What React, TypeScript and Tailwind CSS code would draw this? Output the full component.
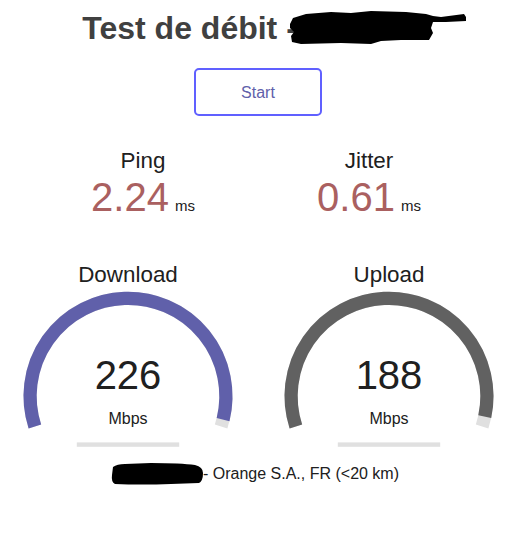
import React from 'react'

// canvas-like gauge geometry (same maths as the original meter drawing)
const W = 256
const H = 200
const sz = H * 0.0055
const LW = 12 * sz
const CX = W / 2
const CY = H - 58 * sz
const R = H / 1.8 - LW

const mbpsToAmount = (s: number) => 1 - 1 / Math.pow(1.3, Math.sqrt(s))

function arcPath(a0: number, a1: number) {
  const x0 = CX + R * Math.cos(a0)
  const y0 = CY + R * Math.sin(a0)
  const x1 = CX + R * Math.cos(a1)
  const y1 = CY + R * Math.sin(a1)
  const large = a1 - a0 > Math.PI ? 1 : 0
  return `M ${x0} ${y0} A ${R} ${R} 0 ${large} 1 ${x1} ${y1}`
}

const Gauge: React.FC<{ name: string; value: string; color: string }> = ({ name, value, color }) => {
  const amount = mbpsToAmount(Number(value))
  const start = -Math.PI * 1.1
  return (
    <div className="relative w-[256px] h-[200px] shrink-0">
      <svg className="absolute inset-0" width={W} height={H} viewBox={`0 0 ${W} ${H}`}>
        <path d={arcPath(start, Math.PI * 0.1)} stroke="#E0E0E0" strokeWidth={LW} fill="none" />
        <path d={arcPath(start, amount * Math.PI * 1.2 + start)} stroke={color} strokeWidth={LW} fill="none" />
        <rect x={W * 0.3} y={H - 16 * sz} width={W * 0.4} height={4 * sz} fill="#E0E0E0" />
      </svg>
      <div className="relative flex flex-col items-center text-[#202020]">
        <div className="pt-[2px] text-[22.4px] leading-[26px]">{name}</div>
        <div className="mt-[64px] text-[40px] leading-[46px]">{value}</div>
        <div className="mt-[12px] text-[16px] leading-[18px]">Mbps</div>
      </div>
    </div>
  )
}

const SmallTest: React.FC<{ name: string; value: string }> = ({ name, value }) => (
  <div className="w-[224px] h-[112px] shrink-0 text-center">
    <div className="text-[22.4px] leading-[26px] text-[#202020]">{name}</div>
    <div className="flex items-baseline justify-center">
      <span className="text-[40px] leading-[46px] text-[#AA6060]">{value}</span>
      <span className="ml-[6px] text-[15px] text-[#202020]">ms</span>
    </div>
  </div>
)

export default function App() {
  return (
    <div className="w-[516px] bg-white pt-[10px] text-center font-['Liberation_Sans',Arial,sans-serif]">
      <h1 className="mb-[21px] text-[32px] leading-[37px] font-bold text-[#404040]">
        Test de débit -{' '}
        <svg className="inline-block align-[-4px] overflow-visible" width="128" height="32" viewBox="0 0 128 32">
          <path
            d="M-16 13 L-13 7 L0 3 L25 1 L45 2 L65 0 L100 1 L120 3 L127 5 L135 6 L158 3 L160 6 L160 10 L140 11 L127 11 L125 17 L127 22 L123 29 L95 29 L75 30 L65 33 L35 32 L-5 33 L-14 31 L-15 25 L-12 21 L-16 17 Z"
            fill="#000"
          />
        </svg>
      </h1>

      <button className="w-[128px] h-[48px] rounded-[5px] border-[2.4px] border-[#6060FF] bg-transparent text-[16px] leading-[43px] text-[#6060AA]">
        Start
      </button>

      <div className="mt-[32px] flex pl-[31px] gap-[2px]">
        <SmallTest name="Ping" value="2.24" />
        <SmallTest name="Jitter" value="0.61" />
      </div>

      <div className="flex gap-[5px]">
        <Gauge name="Download" value="226" color="#6060AA" />
        <Gauge name="Upload" value="188" color="#616161" />
      </div>

      <div className="mt-[3px] pr-[6px] text-[16px] leading-[18px] text-[#202020]">
        <svg className="inline-block align-[-6px]" width="92" height="22" viewBox="0 0 92 22">
          <path
            d="M2 4 Q6 1 14 1 L40 0 Q70 0 84 2 Q92 4 92 10 Q92 18 88 20 L60 21 Q30 22 4 21 Q0 19 1 12 Z"
            fill="#000"
          />
        </svg>
        - Orange S.A., FR (&lt;20 km)
      </div>
    </div>
  )
}
